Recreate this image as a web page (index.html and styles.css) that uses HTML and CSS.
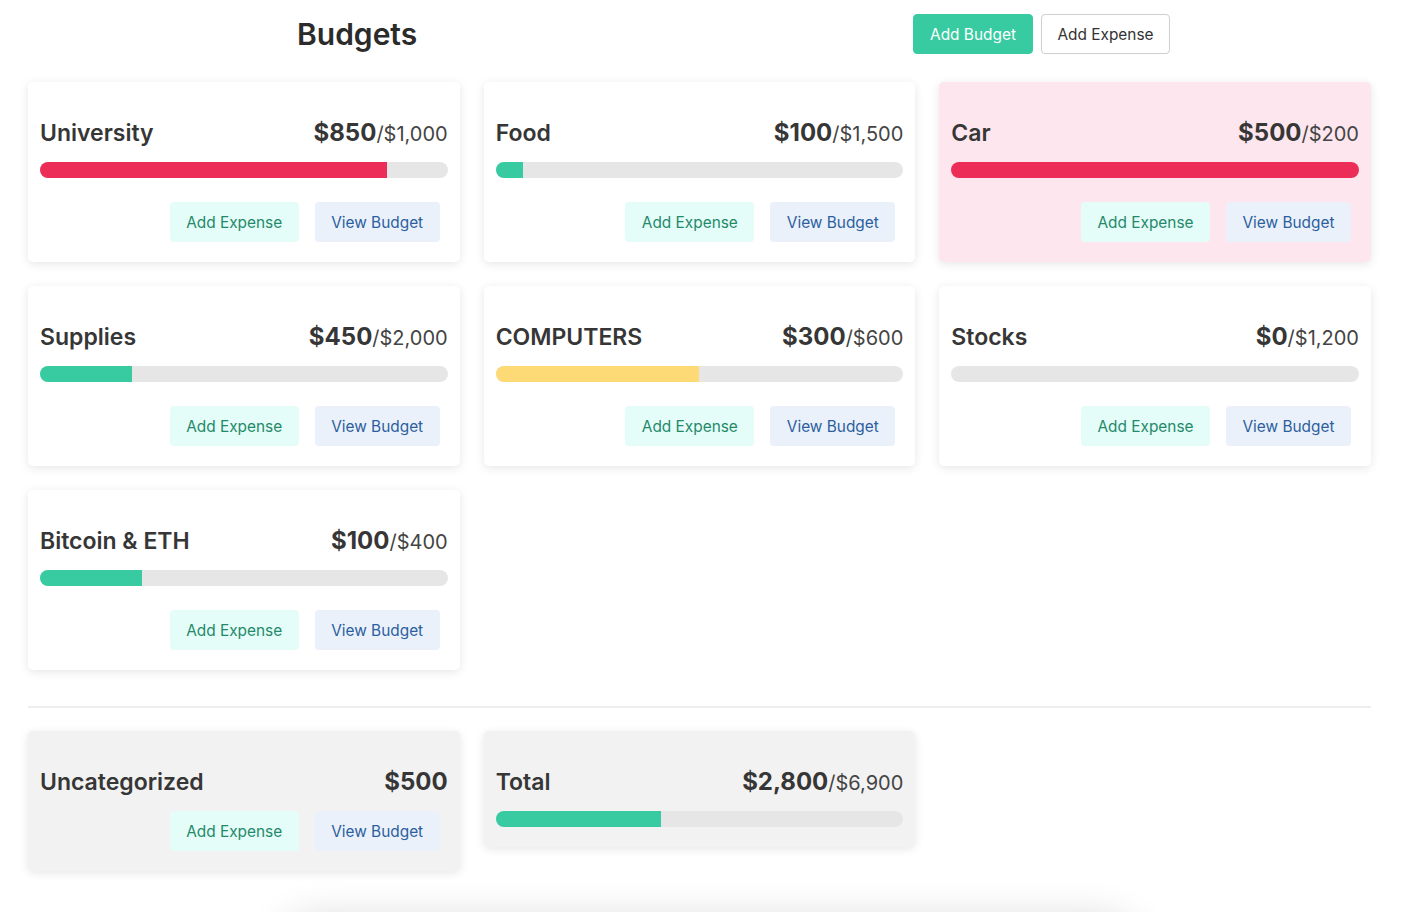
FILE: index.html
```html
<!DOCTYPE html>
<html lang="en">
<head>
<meta charset="utf-8">
<title>Budgets</title>
<link rel="stylesheet" href="styles.css">
</head>
<body>
<div class="page">
  <header class="topbar">
    <h1 class="page-title">Budgets</h1>
    <div class="top-actions">
      <button class="btn btn-primary">Add Budget</button>
      <button class="btn btn-outline">Add Expense</button>
    </div>
  </header>

  <section class="grid">
    <div class="card">
      <div class="card-head"><h2 class="card-title">University</h2><div class="amount"><b>$850</b><span class="max">/$1,000</span></div></div>
      <div class="bar"><div class="fill red" style="width:85%"></div></div>
      <div class="actions"><button class="btn btn-add">Add Expense</button><button class="btn btn-view">View Budget</button></div>
    </div>
    <div class="card">
      <div class="card-head"><h2 class="card-title">Food</h2><div class="amount"><b>$100</b><span class="max">/$1,500</span></div></div>
      <div class="bar"><div class="fill green" style="width:6.67%"></div></div>
      <div class="actions"><button class="btn btn-add">Add Expense</button><button class="btn btn-view">View Budget</button></div>
    </div>
    <div class="card card-over">
      <div class="card-head"><h2 class="card-title">Car</h2><div class="amount"><b>$500</b><span class="max">/$200</span></div></div>
      <div class="bar"><div class="fill red" style="width:100%"></div></div>
      <div class="actions"><button class="btn btn-add">Add Expense</button><button class="btn btn-view">View Budget</button></div>
    </div>
    <div class="card">
      <div class="card-head"><h2 class="card-title">Supplies</h2><div class="amount"><b>$450</b><span class="max">/$2,000</span></div></div>
      <div class="bar"><div class="fill green" style="width:22.5%"></div></div>
      <div class="actions"><button class="btn btn-add">Add Expense</button><button class="btn btn-view">View Budget</button></div>
    </div>
    <div class="card">
      <div class="card-head"><h2 class="card-title">COMPUTERS</h2><div class="amount"><b>$300</b><span class="max">/$600</span></div></div>
      <div class="bar"><div class="fill yellow" style="width:50%"></div></div>
      <div class="actions"><button class="btn btn-add">Add Expense</button><button class="btn btn-view">View Budget</button></div>
    </div>
    <div class="card">
      <div class="card-head"><h2 class="card-title">Stocks</h2><div class="amount"><b>$0</b><span class="max">/$1,200</span></div></div>
      <div class="bar"><div class="fill green" style="width:0%"></div></div>
      <div class="actions"><button class="btn btn-add">Add Expense</button><button class="btn btn-view">View Budget</button></div>
    </div>
    <div class="card">
      <div class="card-head"><h2 class="card-title">Bitcoin &amp; ETH</h2><div class="amount"><b>$100</b><span class="max">/$400</span></div></div>
      <div class="bar"><div class="fill green" style="width:25%"></div></div>
      <div class="actions"><button class="btn btn-add">Add Expense</button><button class="btn btn-view">View Budget</button></div>
    </div>
  </section>

  <hr class="divider">

  <section class="grid grid-summary">
    <div class="card card-muted">
      <div class="card-head"><h2 class="card-title">Uncategorized</h2><div class="amount"><b>$500</b></div></div>
      <div class="actions"><button class="btn btn-add">Add Expense</button><button class="btn btn-view">View Budget</button></div>
    </div>
    <div class="card card-muted">
      <div class="card-head"><h2 class="card-title">Total</h2><div class="amount"><b>$2,800</b><span class="max">/$6,900</span></div></div>
      <div class="bar"><div class="fill green" style="width:40.58%"></div></div>
    </div>
  </section>

  <div class="ghost"></div>
</div>
</body>
</html>
```

FILE: styles.css
```css
* { box-sizing: border-box; }

html, body {
  margin: 0;
  padding: 0;
  background: #fff;
  overflow: hidden;
}

body {
  font-family: Inter, "Noto Sans", "Liberation Sans", sans-serif;
  color: #333;
  height: 912px;
}

.page {
  margin: 0 33px 0 28px;
}

.topbar {
  display: flex;
  align-items: center;
  justify-content: space-between;
  padding: 14px 201px 0 269px;
  height: 54px;
}

.page-title {
  margin: 0;
  font-size: 30px;
  font-weight: 600;
  color: #2b2b2b;
  line-height: 38px;
}

.top-actions {
  display: flex;
  gap: 8px;
}

.btn {
  font-family: inherit;
  font-size: 15.4px;
  line-height: 22px;
  height: 40px;
  padding: 1px 8px 0;
  border: 1px solid transparent;
  border-radius: 4px;
  cursor: pointer;
  white-space: nowrap;
  text-align: center;
}

.btn-primary {
  background: #38cba1;
  color: #fff;
  border-color: #38cba1;
  width: 120px;
}

.btn-outline {
  background: #fff;
  color: #333;
  border-color: #cfcfcf;
  width: 129px;
}

.grid {
  display: grid;
  grid-template-columns: repeat(3, 1fr);
  gap: 24px;
  margin-top: 28px;
}

.grid-summary { align-items: start; }

.card {
  background: #fff;
  border-radius: 5px;
  box-shadow: 0 2px 10px rgba(0, 0, 0, 0.10);
  padding: 36px 12px 20px;
  display: flex;
  flex-direction: column;
}

.card-over { background: #fde6ed; }
.card-muted { background: #f2f2f2; }

.card-head {
  display: flex;
  justify-content: space-between;
  align-items: baseline;
  height: 30px;
}

.card-title {
  margin: 0;
  font-size: 23px;
  font-weight: 600;
  color: #363636;
  line-height: 30px;
}

.amount {
  font-size: 24px;
  line-height: 30px;
  color: #363636;
}

.amount b { font-weight: 700; }

.max {
  font-size: 20px;
  font-weight: 400;
  color: #444;
}

.bar {
  margin-top: 14px;
  height: 16px;
  background: #e6e6e6;
  border-radius: 8px;
  overflow: hidden;
}

.fill { height: 100%; }
.fill.red { background: #ec2d57; }
.fill.green { background: #38cba1; }
.fill.yellow { background: #fdda75; }

.actions {
  display: flex;
  justify-content: flex-end;
  gap: 16px;
  padding-right: 8px;
  margin-top: 24px;
}

.card-muted .actions { margin-top: 14px; }

.btn-add {
  background: #e5fdf8;
  color: #24896a;
  width: 129px;
}

.btn-view {
  background: #ebf1fa;
  color: #2c5f9e;
  width: 125px;
}

.divider {
  border: 0;
  border-top: 2px solid #eeeeee;
  margin: 36px 0 0;
}

.grid + .divider + .grid { margin-top: 23px; }

.ghost {
  margin: 52px 231px 0 250px;
  height: 80px;
  border-radius: 40px;
  background: #fff;
  box-shadow: 0 -4px 40px rgba(0, 0, 0, 0.16);
}
```
